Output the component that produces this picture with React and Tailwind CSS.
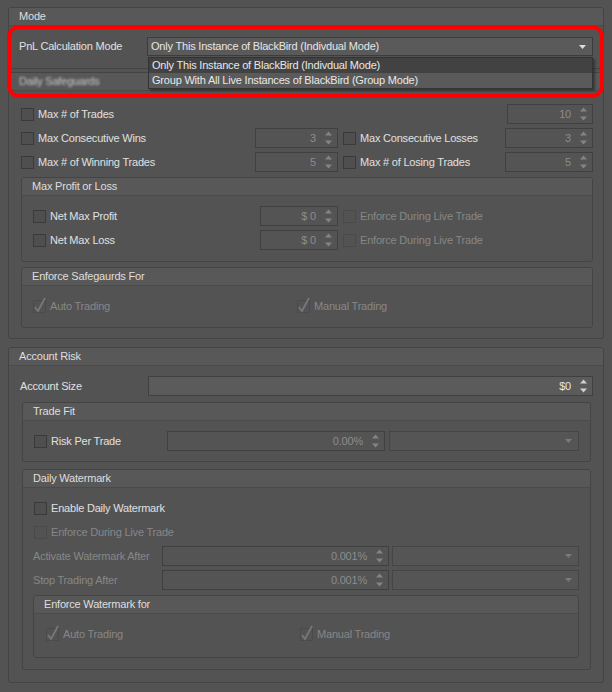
import React from 'react';

const FONT = { fontFamily: '"Liberation Sans", Arial, sans-serif' };

// small up/down arrows used by the numeric boxes
const SpinArrows = ({ color = '#8a8a8a' }) => (
  <svg width="7" height="14" viewBox="0 0 7 14" className="shrink-0">
    <polygon points="0,4.5 3.5,0.5 7,4.5" fill={color} />
    <polygon points="0,9.5 7,9.5 3.5,13.5" fill={color} />
  </svg>
);

const DownArrow = ({ color = '#7a7a7a' }) => (
  <svg width="7" height="4" viewBox="0 0 7 4" className="shrink-0">
    <polygon points="0,0 7,0 3.5,4" fill={color} />
  </svg>
);

const Spin = ({ value, className = '', bright = false }) => (
  <div
    className={`h-[20px] border border-[#404040] flex items-center justify-end pr-[5px] ${
      bright ? 'bg-[#5b5b5b] text-[#e4e4e4]' : 'bg-[#545454] text-[#8c8c8c]'
    } ${className}`}
  >
    <span className="mr-[9px]">{value}</span>
    <SpinArrows color={bright ? '#d0d0d0' : '#848484'} />
  </div>
);

const Combo = ({ className = '' }) => (
  <div className={`h-[20px] border border-[#454545] bg-[#555555] flex items-center justify-end pr-[6px] ${className}`}>
    <DownArrow />
  </div>
);

const Check = ({ checked = false, disabled = false }) => (
  <div
    className={`relative w-[13px] h-[13px] shrink-0 border ${
      disabled ? 'border-[#4a4a4a] bg-[#535353]' : 'border-[#3a3a3a] bg-[#4f4f4f]'
    }`}
  >
    {checked && (
      <svg width="14" height="16" viewBox="0 0 14 16" className="absolute left-[-1px] top-[-4px]">
        <path d="M2 10 L5 14 L12 1" stroke="#777777" strokeWidth="1.8" fill="none" />
      </svg>
    )}
  </div>
);

const CheckLabel = ({ label, checked, disabled }) => (
  <div className="flex items-center">
    <Check checked={checked} disabled={disabled} />
    <span className={`ml-[4px] whitespace-nowrap ${disabled ? 'text-[#878787]' : 'text-[#e0e0e0]'}`}>{label}</span>
  </div>
);

const Group = ({ title, children, className = '', bodyClass = '', blur = false }) => (
  <div className={`border border-[#444444] rounded-[3px] ${className}`}>
    <div className="h-[18px] bg-[#585858] border-b border-[#4b4b4b] rounded-t-[2px] flex items-center pl-[10px]">
      <span className={`whitespace-nowrap ${blur ? 'text-[#c8c8c8] blur-[1.2px]' : 'text-[#dedede]'}`}>{title}</span>
    </div>
    <div className={bodyClass}>{children}</div>
  </div>
);

export default function App() {
  return (
    <div
      className="relative w-[612px] h-[692px] bg-[#535353] overflow-hidden pt-[7px] pl-[8px] text-[11px] tracking-[-0.2px] leading-none"
      style={FONT}
    >
      <div className="w-[596px] flex flex-col">
        {/* Mode */}
        <Group title="Mode" bodyClass="pt-[11px] pb-[12px] pl-[10px] pr-[10px]">
          <div className="flex items-center">
            <span className="w-[128px] text-[#e0e0e0] whitespace-nowrap">PnL Calculation Mode</span>
            <div className="flex-1 h-[19px] border border-[#3c3c3c] bg-[#5a5a5a] flex items-center justify-between pl-[3px] pr-[6px] text-[#e6e6e6]">
              <span>Only This Instance of BlackBird (Indivdual Mode)</span>
              <DownArrow color="#dcdcdc" />
            </div>
          </div>
        </Group>

        {/* Daily Safeguards */}
        <Group title="Daily Safeguards" blur className="mt-[3px]" bodyClass="pt-[13px] pb-[10px] pl-[12px] pr-[10px]">
          <div className="flex flex-col gap-[4px]">
            <div className="h-[20px] flex items-center justify-between">
              <CheckLabel label="Max # of Trades" />
              <Spin value="10" className="w-[86px]" />
            </div>
            <div className="h-[20px] flex items-center">
              <div className="w-[317px] flex items-center justify-between">
                <CheckLabel label="Max Consecutive Wins" />
                <Spin value="3" className="w-[83px]" />
              </div>
              <div className="ml-[5px] flex-1 flex items-center justify-between">
                <CheckLabel label="Max Consecutive Losses" />
                <Spin value="3" className="w-[88px]" />
              </div>
            </div>
            <div className="h-[20px] flex items-center">
              <div className="w-[317px] flex items-center justify-between">
                <CheckLabel label="Max # of Winning Trades" />
                <Spin value="5" className="w-[83px]" />
              </div>
              <div className="ml-[5px] flex-1 flex items-center justify-between">
                <CheckLabel label="Max # of Losing Trades" />
                <Spin value="5" className="w-[88px]" />
              </div>
            </div>
          </div>

          <Group title="Max Profit or Loss" className="mt-[5px]" bodyClass="pt-[10px] pb-[11px] pl-[11px] flex flex-col gap-[4px]">
            <div className="h-[20px] flex items-center">
              <div className="w-[305px] flex items-center justify-between">
                <CheckLabel label="Net Max Profit" />
                <Spin value="$ 0" className="w-[78px]" />
              </div>
              <div className="ml-[5px]">
                <CheckLabel label="Enforce During Live Trade" disabled />
              </div>
            </div>
            <div className="h-[20px] flex items-center">
              <div className="w-[305px] flex items-center justify-between">
                <CheckLabel label="Net Max Loss" />
                <Spin value="$ 0" className="w-[78px]" />
              </div>
              <div className="ml-[5px]">
                <CheckLabel label="Enforce During Live Trade" disabled />
              </div>
            </div>
          </Group>

          <Group title="Enforce Safegaurds For" className="mt-[5px]" bodyClass="pt-[10px] pb-[11px] pl-[11px]">
            <div className="h-[20px] flex items-center">
              <div className="w-[264px]">
                <CheckLabel label="Auto Trading" checked disabled />
              </div>
              <CheckLabel label="Manual Trading" checked disabled />
            </div>
          </Group>
        </Group>

        {/* Account Risk */}
        <Group title="Account Risk" className="mt-[8px]" bodyClass="pt-[10px] pb-[12px] pl-[11px] pr-[10px]">
          <div className="h-[20px] flex items-center">
            <span className="w-[128px] text-[#e0e0e0] whitespace-nowrap">Account Size</span>
            <Spin value="$0" bright className="flex-1" />
          </div>

          <Group title="Trade Fit" className="mt-[6px] mx-[2px]" bodyClass="pt-[10px] pb-[10px] pl-[11px]">
            <div className="h-[20px] flex items-center">
              <div className="w-[133px]">
                <CheckLabel label="Risk Per Trade" />
              </div>
              <Spin value="0.00%" className="w-[218px]" />
              <Combo className="ml-[4px] w-[190px]" />
            </div>
          </Group>

          <Group title="Daily Watermark" className="mt-[7px] mx-[2px]" bodyClass="pt-[10px] pb-[11px] pl-[10px]">
            <div className="flex flex-col gap-[4px]">
              <div className="h-[20px] flex items-center pl-[1px]">
                <CheckLabel label="Enable Daily Watermark" />
              </div>
              <div className="h-[20px] flex items-center pl-[1px]">
                <CheckLabel label="Enforce During Live Trade" disabled />
              </div>
              <div className="h-[20px] flex items-center">
                <span className="w-[129px] text-[#878787] whitespace-nowrap">Activate Watermark After</span>
                <Spin value="0.001%" className="w-[227px]" />
                <Combo className="ml-[3px] w-[187px]" />
              </div>
              <div className="h-[20px] flex items-center">
                <span className="w-[129px] text-[#878787] whitespace-nowrap">Stop Trading After</span>
                <Spin value="0.001%" className="w-[227px]" />
                <Combo className="ml-[3px] w-[187px]" />
              </div>
            </div>

            <Group title="Enforce Watermark for" className="mt-[5px] w-[546px]" bodyClass="pt-[10px] pb-[13px] pl-[12px]">
              <div className="h-[20px] flex items-center">
                <div className="w-[254px]">
                  <CheckLabel label="Auto Trading" checked disabled />
                </div>
                <CheckLabel label="Manual Trading" checked disabled />
              </div>
            </Group>
          </Group>
        </Group>
      </div>

      {/* open dropdown list */}
      <div className="absolute left-[148px] top-[57px] w-[445px] border border-[#333333] bg-[#5a5a5a] shadow-[2px_2px_2px_rgba(0,0,0,0.35)] text-[#e8e8e8]">
        <div className="h-[15px] bg-[#424242] flex items-center pl-[3px]">Only This Instance of BlackBird (Indivdual Mode)</div>
        <div className="h-[15px] bg-[#5a5a5a] flex items-center pl-[3px]">Group With All Live Instances of BlackBird (Group Mode)</div>
      </div>

      {/* red highlight annotation */}
      <div className="absolute left-[7px] top-[25px] w-[597px] h-[73px] border-4 border-[#ff0000] rounded-[12px] pointer-events-none" />
    </div>
  );
}
